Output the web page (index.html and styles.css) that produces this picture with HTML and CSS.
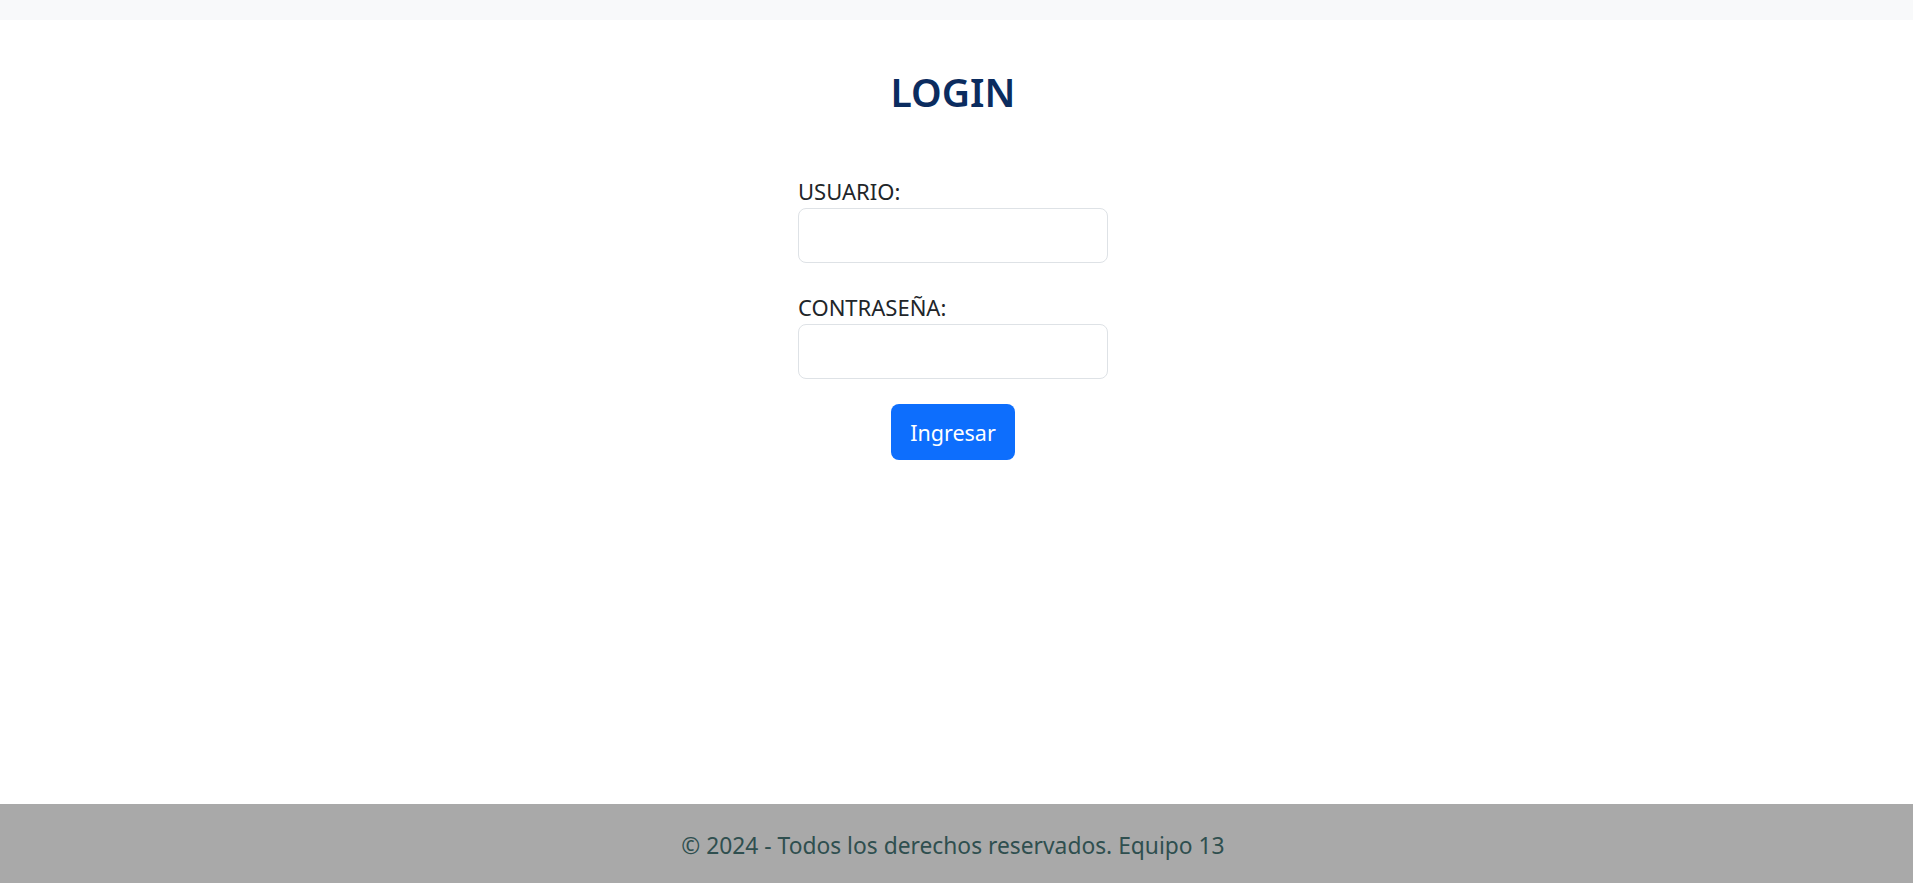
FILE: index.html
```html
<!DOCTYPE html>
<html lang="es">
<head>
<meta charset="utf-8">
<title>Login</title>
<link rel="stylesheet" href="styles.css">
</head>
<body>
<div class="page">
  <header class="topbar"></header>
  <main class="main">
    <h2 class="title">LOGIN</h2>
    <form class="login-form">
      <label class="field-label" for="usuario">USUARIO:</label>
      <input class="field-input" id="usuario" type="text">
      <label class="field-label second" for="pass">CONTRASEÑA:</label>
      <input class="field-input" id="pass" type="password">
      <div class="actions">
        <button class="btn-primary" type="button">Ingresar</button>
      </div>
    </form>
  </main>
  <footer class="footer">© 2024 - Todos los derechos reservados. Equipo 13</footer>
</div>
</body>
</html>
```
FILE: styles.css
```css
html, body {
  margin: 0;
  padding: 0;
  background: #ffffff;
}
body {
  font-family: "Noto Sans", "Open Sans", "Liberation Sans", sans-serif;
  color: #212529;
}
.page {
  width: 1913px;
  min-height: 883px;
  display: flex;
  flex-direction: column;
}
.topbar {
  height: 20px;
  background: #f8f9fa;
}
.main {
  flex: 1;
  display: flex;
  flex-direction: column;
  align-items: center;
  padding-right: 7px;
}
.title {
  margin: 47px 0 0 0;
  font-size: 39px;
  line-height: 50px;
  font-weight: 600;
  color: #0b2c5f;
}
.login-form {
  width: 310px;
  display: flex;
  flex-direction: column;
  margin-top: 59px;
}
.field-label {
  display: block;
  font-size: 22px;
  line-height: 30px;
  margin-bottom: 2px;
  color: #212529;
}
.field-label.second {
  margin-top: 29px;
}
.field-input {
  box-sizing: border-box;
  width: 310px;
  height: 55px;
  border: 1px solid #dee2e6;
  border-radius: 8px;
  background: #fff;
  font-size: 20px;
  padding: 8px 15px;
  font-family: inherit;
}
.actions {
  display: flex;
  justify-content: center;
  margin-top: 25px;
}
.btn-primary {
  box-sizing: border-box;
  width: 124px;
  height: 56px;
  border: 0;
  border-radius: 8px;
  background: #0d6efd;
  color: #ffffff;
  font-family: inherit;
  font-size: 21.5px;
  padding: 0;
}
.footer {
  box-sizing: border-box;
  height: 79px;
  background: #a9a9a9;
  color: #2f4f4f;
  font-size: 22.8px;
  display: flex;
  align-items: center;
  justify-content: center;
  padding: 4px 7px 0 0;
}
```
